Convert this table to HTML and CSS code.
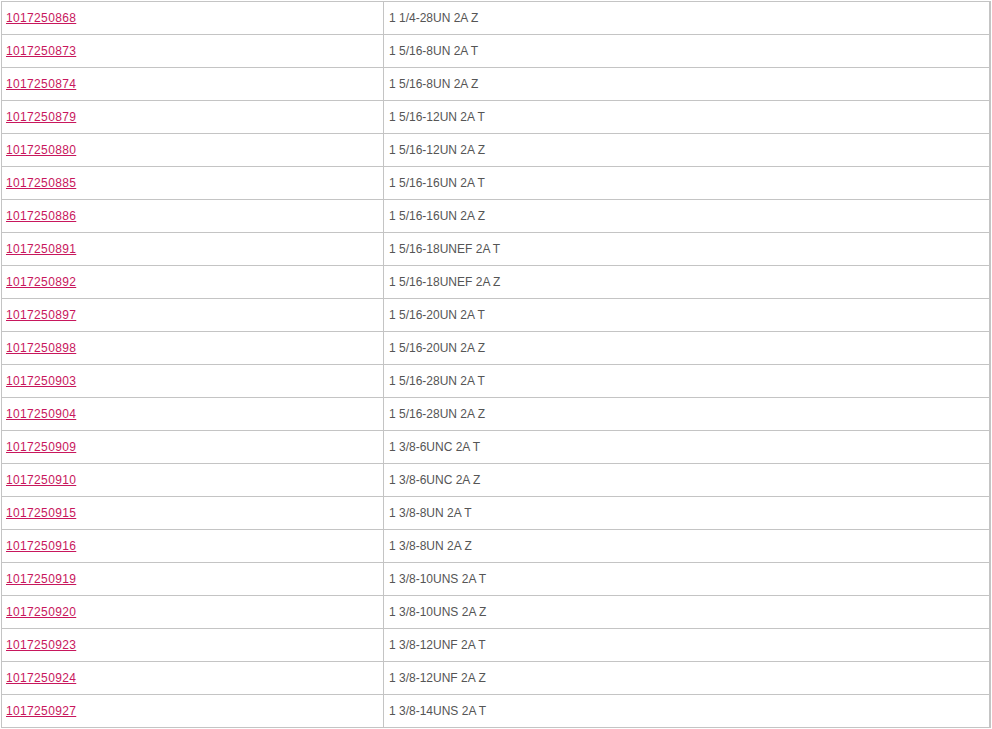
FILE: index.html
```html
<!DOCTYPE html>
<html>
<head>
<meta charset="utf-8">
<link rel="stylesheet" href="styles.css">
</head>
<body>
<table class="parts">
<tbody>
<tr><td class="code"><a href="#">1017250868</a></td><td class="desc">1 1/4-28UN 2A Z</td></tr>
<tr><td class="code"><a href="#">1017250873</a></td><td class="desc">1 5/16-8UN 2A T</td></tr>
<tr><td class="code"><a href="#">1017250874</a></td><td class="desc">1 5/16-8UN 2A Z</td></tr>
<tr><td class="code"><a href="#">1017250879</a></td><td class="desc">1 5/16-12UN 2A T</td></tr>
<tr><td class="code"><a href="#">1017250880</a></td><td class="desc">1 5/16-12UN 2A Z</td></tr>
<tr><td class="code"><a href="#">1017250885</a></td><td class="desc">1 5/16-16UN 2A T</td></tr>
<tr><td class="code"><a href="#">1017250886</a></td><td class="desc">1 5/16-16UN 2A Z</td></tr>
<tr><td class="code"><a href="#">1017250891</a></td><td class="desc">1 5/16-18UNEF 2A T</td></tr>
<tr><td class="code"><a href="#">1017250892</a></td><td class="desc">1 5/16-18UNEF 2A Z</td></tr>
<tr><td class="code"><a href="#">1017250897</a></td><td class="desc">1 5/16-20UN 2A T</td></tr>
<tr><td class="code"><a href="#">1017250898</a></td><td class="desc">1 5/16-20UN 2A Z</td></tr>
<tr><td class="code"><a href="#">1017250903</a></td><td class="desc">1 5/16-28UN 2A T</td></tr>
<tr><td class="code"><a href="#">1017250904</a></td><td class="desc">1 5/16-28UN 2A Z</td></tr>
<tr><td class="code"><a href="#">1017250909</a></td><td class="desc">1 3/8-6UNC 2A T</td></tr>
<tr><td class="code"><a href="#">1017250910</a></td><td class="desc">1 3/8-6UNC 2A Z</td></tr>
<tr><td class="code"><a href="#">1017250915</a></td><td class="desc">1 3/8-8UN 2A T</td></tr>
<tr><td class="code"><a href="#">1017250916</a></td><td class="desc">1 3/8-8UN 2A Z</td></tr>
<tr><td class="code"><a href="#">1017250919</a></td><td class="desc">1 3/8-10UNS 2A T</td></tr>
<tr><td class="code"><a href="#">1017250920</a></td><td class="desc">1 3/8-10UNS 2A Z</td></tr>
<tr><td class="code"><a href="#">1017250923</a></td><td class="desc">1 3/8-12UNF 2A T</td></tr>
<tr><td class="code"><a href="#">1017250924</a></td><td class="desc">1 3/8-12UNF 2A Z</td></tr>
<tr><td class="code"><a href="#">1017250927</a></td><td class="desc">1 3/8-14UNS 2A T</td></tr>
</tbody>
</table>
</body>
</html>
```
FILE: styles.css
```css
html, body {
  margin: 0;
  padding: 0;
  background: #ffffff;
}
body {
  padding: 1px 0 0 1px;
  font-family: "Liberation Sans", Arial, sans-serif;
  font-size: 12px;
  color: #555555;
}
.parts {
  border-collapse: collapse;
  width: 990px;
  border-right: 2px solid #c4c4c4;
}
.parts td {
  border: 1px solid #c4c4c4;
  height: 33px;
  padding: 0 5px;
  box-sizing: border-box;
  vertical-align: middle;
  line-height: 14px;
}
.parts td.code {
  width: 382px;
  padding-left: 4px;
}
.parts a {
  color: #c8175d;
  text-decoration: underline;
  letter-spacing: 0.35px;
}
```
